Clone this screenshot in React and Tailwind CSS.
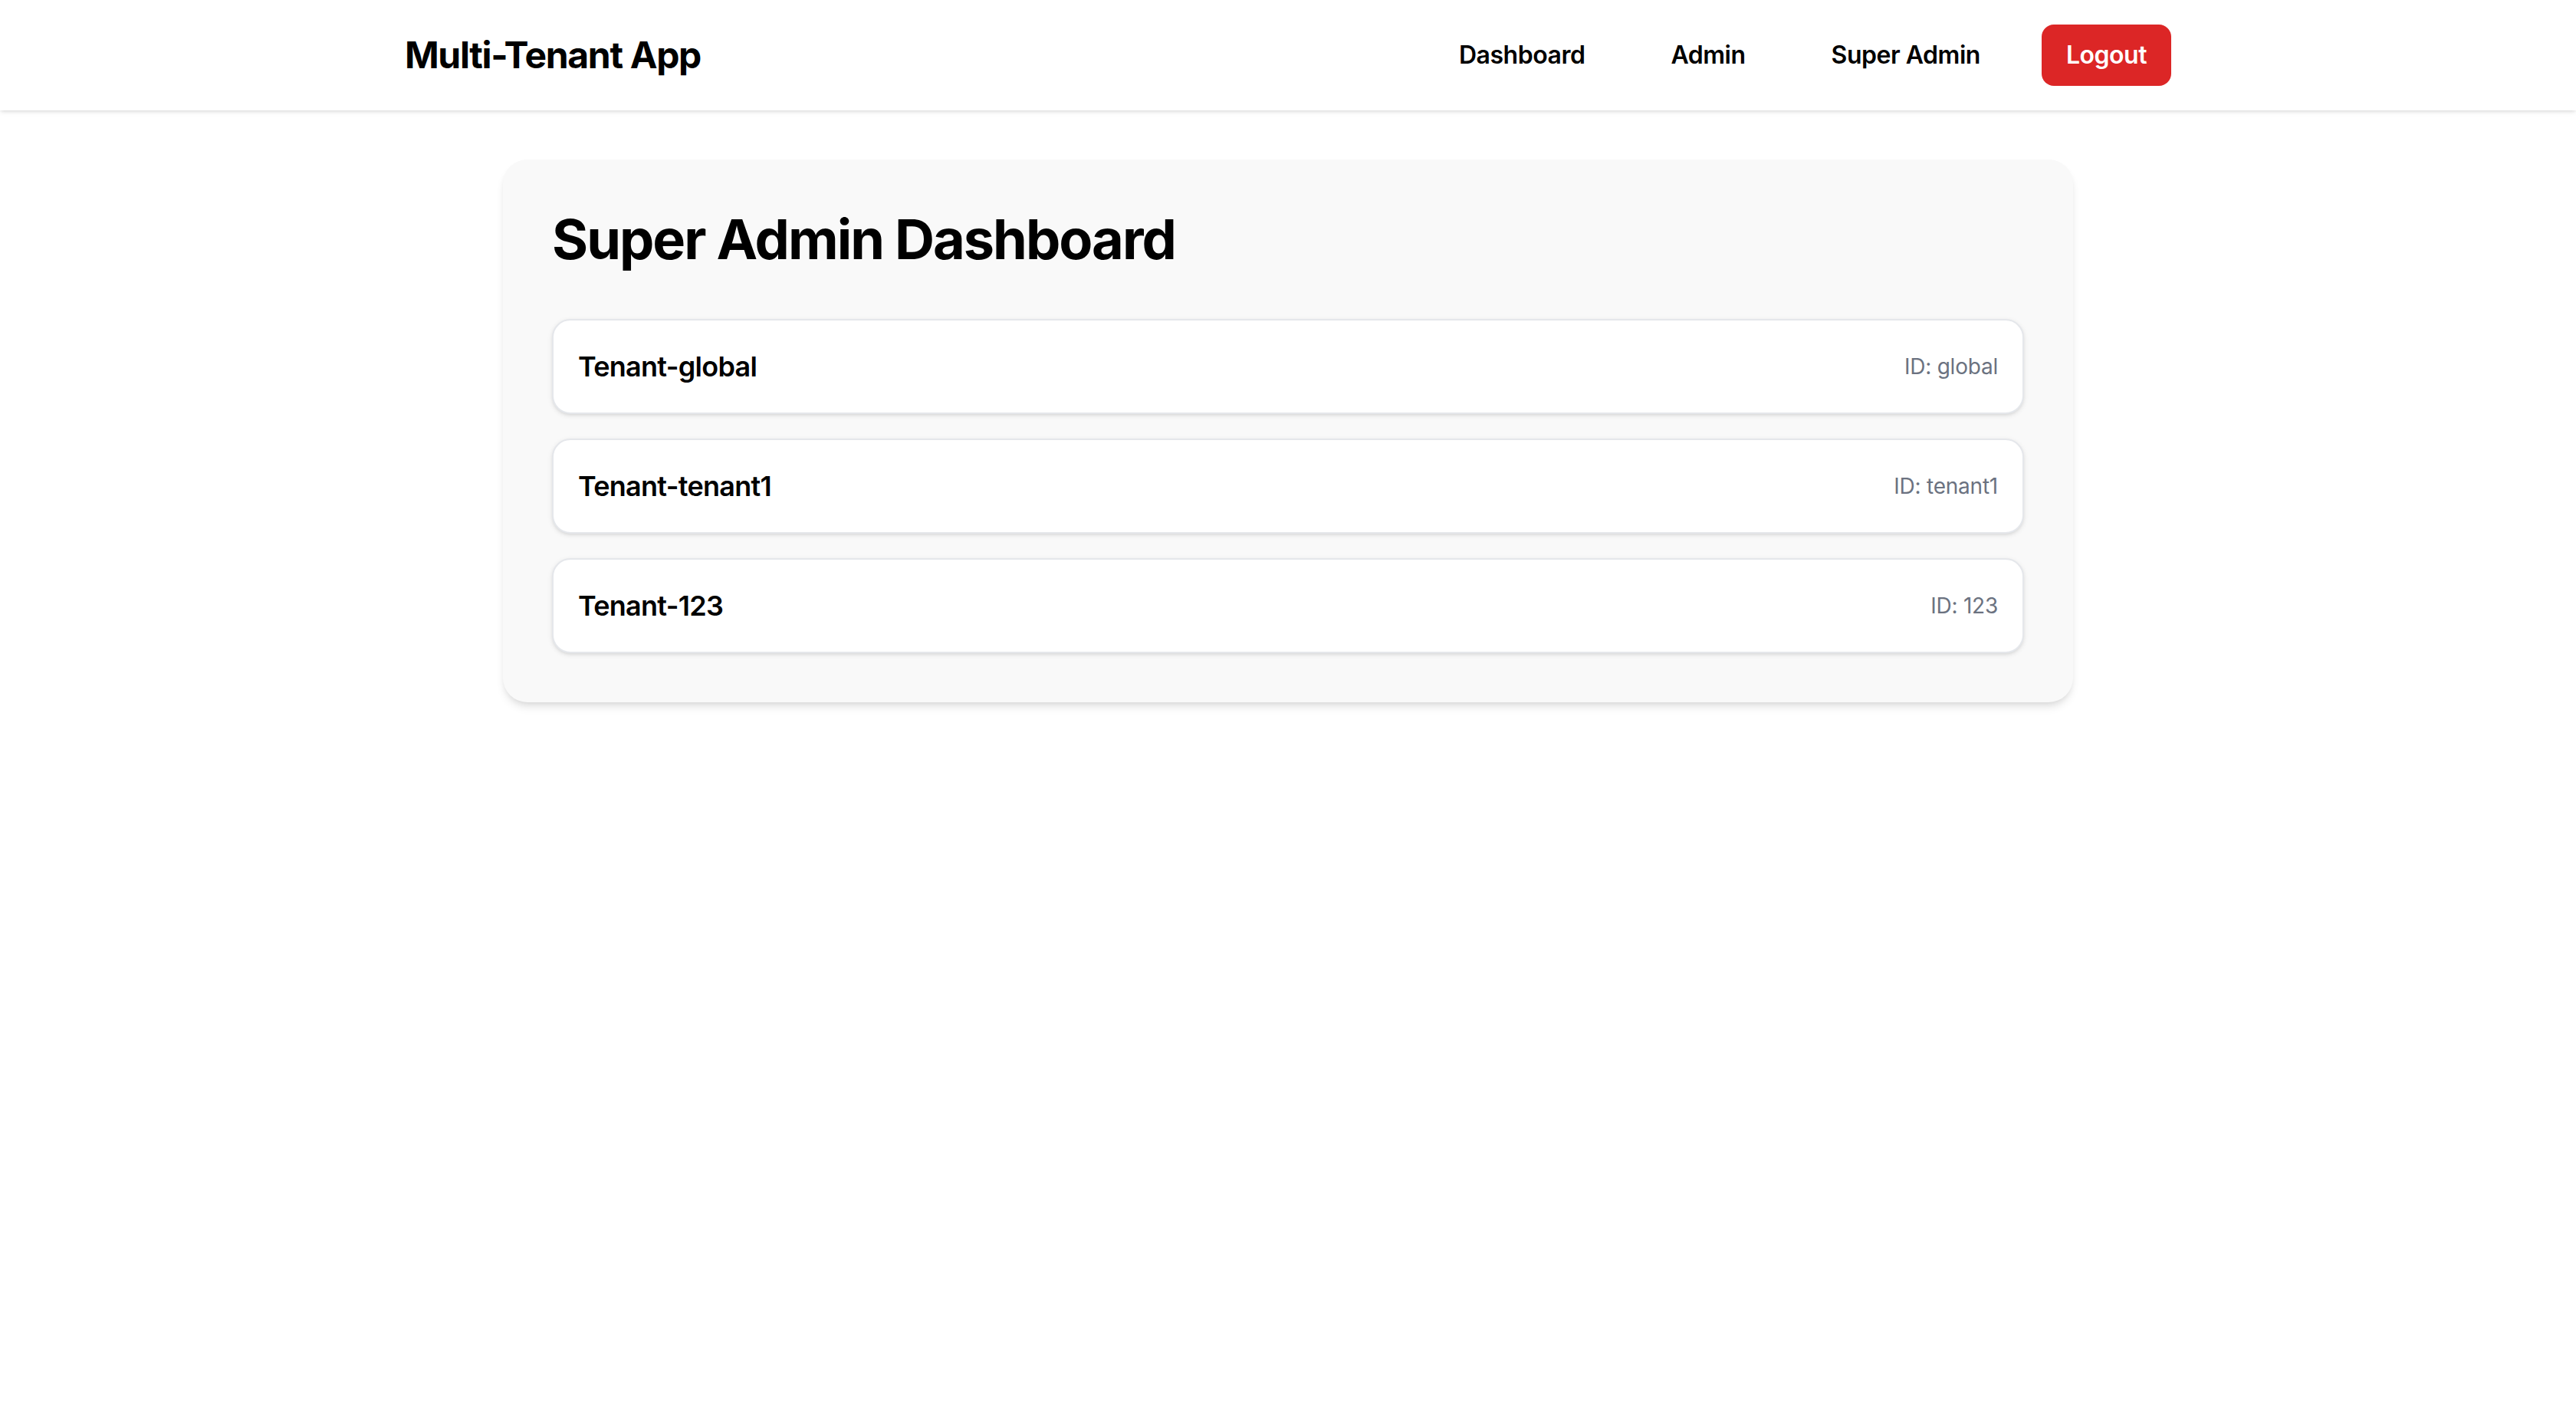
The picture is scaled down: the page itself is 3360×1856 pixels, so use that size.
import React from 'react';

const tenants = [
  { name: 'Tenant-global', id: 'global' },
  { name: 'Tenant-tenant1', id: 'tenant1' },
  { name: 'Tenant-123', id: '123' },
];

const NavBar = () => {
  return (
    <header className="bg-white shadow-[0_2px_6px_rgba(0,0,0,0.1),0_2px_4px_-2px_rgba(0,0,0,0.1)]">
      <div className="max-w-[2304px] mx-auto flex items-center justify-between py-8">
        <h1 className="text-[48px] leading-[64px] font-bold tracking-[-0.028em] text-black">Multi-Tenant App</h1>
        <nav className="flex items-center gap-12">
          <a href="#" className="px-8 py-4 text-[32px] leading-[48px] font-semibold tracking-[-0.015em] text-black">Dashboard</a>
          <a href="#" className="px-8 py-4 text-[32px] leading-[48px] font-semibold tracking-[-0.015em] text-black">Admin</a>
          <a href="#" className="px-8 py-4 text-[32px] leading-[48px] font-semibold tracking-[-0.015em] text-black">Super Admin</a>
          <button className="px-8 py-4 rounded-2xl bg-[#dc2626] text-white text-[32px] leading-[48px] font-semibold tracking-[-0.015em]">Logout</button>
        </nav>
      </div>
    </header>
  );
};

const TenantRow = ({ name, id }) => {
  return (
    <div className="flex items-center justify-between bg-white border-2 border-gray-200 rounded-3xl p-8 shadow-[0_2px_6px_rgba(0,0,0,0.1),0_2px_4px_-2px_rgba(0,0,0,0.1)]">
      <span className="text-[36px] leading-[56px] font-semibold tracking-[-0.02em] text-black">{name}</span>
      <span className="text-[28px] leading-[40px] tracking-[-0.008em] text-[#6b7280]">ID: {id}</span>
    </div>
  );
};

const App = () => {
  return (
    <div className="min-h-screen bg-white font-['Inter',sans-serif]">
      <NavBar />
      <main className="max-w-[2048px] mx-auto mt-16 bg-[#f9f9f9] rounded-[32px] p-16 shadow-[0_8px_12px_-2px_rgba(0,0,0,0.1),0_4px_8px_-4px_rgba(0,0,0,0.1)]">
        <h2 className="text-[72px] leading-[80px] font-bold tracking-[-0.028em] text-black mb-16">Super Admin Dashboard</h2>
        <div className="flex flex-col gap-8">
          {tenants.map((t) => (
            <TenantRow key={t.id} name={t.name} id={t.id} />
          ))}
        </div>
      </main>
    </div>
  );
};

export default App;
